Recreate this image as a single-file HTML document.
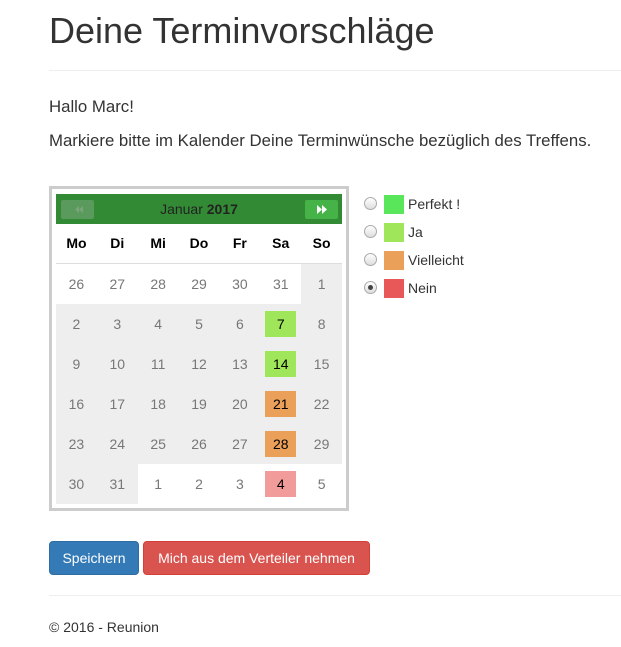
<!DOCTYPE html>
<html><head><meta charset="utf-8"><style>
*{box-sizing:border-box}
body{margin:0;background:#fff;font-family:"Liberation Sans",sans-serif;color:#333;font-size:14px;position:relative;width:621px;height:647px;overflow:hidden}
.a{position:absolute;white-space:nowrap}
h1{position:absolute;left:49px;top:10px;margin:0;font-size:36px;font-weight:400;color:#333;white-space:nowrap}
.hr{position:absolute;left:49px;right:0;height:1px;background:#eee}
.cal{position:absolute;left:49px;top:186px;width:300px;height:325px;border:3px solid #ccc;background:#fff}
.hd{position:absolute;left:4px;top:5px;width:286px;height:30px;background:#338a35}
.btn{position:absolute;top:6px;width:33px;height:19px;border-radius:2px}
.cell{position:absolute;width:40.86px;height:40px;text-align:center;line-height:40px;font-size:14px;color:#777}
.g{background:#eee}
.mark{position:absolute;width:31px;height:26px;color:#000;text-align:center;line-height:26px}
.dn{position:absolute;top:35px;width:40.86px;height:39px;line-height:39px;text-align:center;font-weight:bold;color:#000}
.leg{position:absolute;left:364px;font-size:14px;white-space:nowrap}
.rad{position:absolute;left:0;top:2px;width:13px;height:13px;border-radius:50%;border:1px solid #aaa;background:linear-gradient(#fff,#ddd)}
.box{position:absolute;left:20px;top:0;width:20px;height:19px}
.lt{position:absolute;left:44px;top:1px;color:#333;white-space:nowrap}
.b{position:absolute;top:541px;height:34px;border-radius:4px;color:#fff;font-size:14px;line-height:32px;text-align:center;white-space:nowrap}
</style></head><body>
<h1>Deine Terminvorschläge</h1>
<div class="hr" style="top:70px"></div>
<div class="a" style="left:49px;top:97px;font-size:16.8px">Hallo Marc!</div>
<div class="a" style="left:49px;top:131px;font-size:16.8px">Markiere bitte im Kalender Deine Terminwünsche bezüglich des Treffens.</div>

<div class="cal">
<div class="hd">
 <div class="btn" style="left:5px;background:#5a9a5c"><svg width="33" height="19"><path d="M18 6l-4 3.5 4 3.5zM22 6l-4 3.5 4 3.5z" fill="#7aa57b"/></svg></div>
 <div class="a" style="left:0;width:286px;text-align:center;top:7px;color:#222;font-size:14px">Januar <b>2017</b></div>
 <div class="btn" style="left:249px;background:#45b348"><svg width="33" height="19"><path d="M12 5l5 4.5-5 4.5zM17 5l5 4.5-5 4.5z" fill="#fff"/></svg></div>
</div>
</div>
<script>
var c=document.querySelector('.cal');var h='';
var names=['Mo','Di','Mi','Do','Fr','Sa','So'];
for(var i=0;i<7;i++)h+='<div class="dn" style="left:'+(4+i*40.86)+'px">'+names[i]+'</div>';
h+='<div style="position:absolute;left:4px;top:74px;width:286px;height:1px;background:#ddd"></div>';
var rows=[[26,27,28,29,30,31,1],[2,3,4,5,6,7,8],[9,10,11,12,13,14,15],[16,17,18,19,20,21,22],[23,24,25,26,27,28,29],[30,31,1,2,3,4,5]];
var marks={'1-5':'#a0e65a','2-5':'#a0e65a','3-5':'#eba05a','4-5':'#eba05a','5-5':'#f29b9b'};
for(var r=0;r<6;r++)for(var k=0;k<7;k++){
 var g=(r==0&&k==6)||(r>0&&r<5)||(r==5&&k<2);
 var x=4+k*40.86,y=75+r*40;
 var m=marks[r+'-'+k];
 if(m)h+='<div class="cell'+(g?' g':'')+'" style="left:'+x+'px;top:'+y+'px"><div class="mark" style="left:5px;top:7px;background:'+m+'">'+rows[r][k]+'</div></div>';
 else h+='<div class="cell'+(g?' g':'')+'" style="left:'+x+'px;top:'+y+'px">'+rows[r][k]+'</div>';
}
c.insertAdjacentHTML('beforeend',h);
</script>

<div class="leg" style="top:195px"><div class="rad"></div><div class="box" style="background:#5ae65a"></div><div class="lt">Perfekt !</div></div>
<div class="leg" style="top:223px"><div class="rad"></div><div class="box" style="background:#a0e65a"></div><div class="lt">Ja</div></div>
<div class="leg" style="top:251px"><div class="rad"></div><div class="box" style="background:#eba05a"></div><div class="lt">Vielleicht</div></div>
<div class="leg" style="top:279px"><div class="rad"><div style="position:absolute;left:3px;top:3px;width:5px;height:5px;border-radius:50%;background:#444"></div></div><div class="box" style="background:#e95858"></div><div class="lt">Nein</div></div>

<div class="b" style="left:49px;width:90px;background:#337ab7;border:1px solid #2e6da4">Speichern</div>
<div class="b" style="left:143px;width:227px;background:#d9534f;border:1px solid #d43f3a">Mich aus dem Verteiler nehmen</div>
<div class="hr" style="top:595px"></div>
<div class="a" style="left:49px;top:619px">© 2016 - Reunion</div>
</body></html>
